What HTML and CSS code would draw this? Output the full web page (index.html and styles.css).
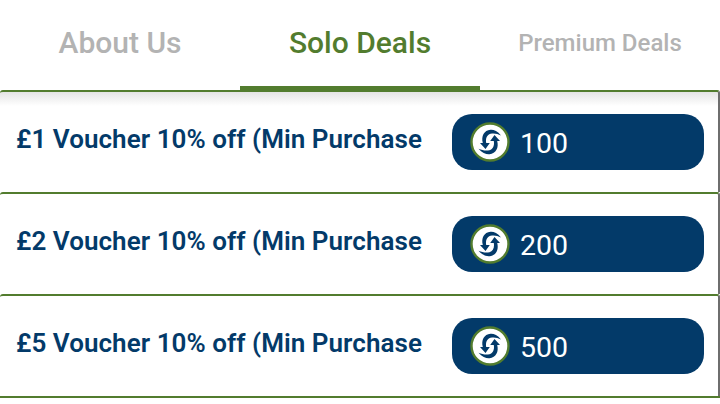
FILE: index.html
```html
<!DOCTYPE html>
<html lang="en">
<head>
<meta charset="utf-8">
<title>Deals</title>
<link rel="stylesheet" href="styles.css">
</head>
<body>
<svg class="defs" width="0" height="0" aria-hidden="true">
  <symbol id="coin" viewBox="0 0 40 40">
    <circle cx="20" cy="20" r="18.5" fill="#fff" stroke="#527c2e" stroke-width="2.4"/>
    <path d="M31 13.5 C27.5 9 23.5 7.5 20.5 7.8 C14 8.3 11 14.5 12.8 21 L10 21 L15.5 27 L19.8 21 L16.2 21 C15.4 16.5 17 12.8 20.5 11.8 C24 10.9 27.5 11.6 31 13.5 Z" fill="#033a69"/>
    <path d="M8.5 26.8 C12 31 16.5 32.5 19.5 32.2 C26 31.7 29 25.5 27.2 19 L30 19 L24.5 13 L20.2 19 L23.8 19 C24.6 23.5 23 27.2 19.5 28.2 C16 29.1 12.5 28.4 8.5 26.8 Z" fill="#033a69"/>
  </symbol>
</svg>
<nav class="tabs">
  <div class="tab tab-about">About Us</div>
  <div class="tab tab-solo">Solo Deals</div>
  <div class="tab tab-premium">Premium Deals</div>
</nav>
<main class="list">
  <article class="card">
    <div class="title">£1 Voucher 10% off (Min Purchase</div>
    <div class="price"><svg class="coin"><use href="#coin"/></svg><span class="amount">100</span></div>
  </article>
  <article class="card">
    <div class="title">£2 Voucher 10% off (Min Purchase</div>
    <div class="price"><svg class="coin"><use href="#coin"/></svg><span class="amount">200</span></div>
  </article>
  <article class="card">
    <div class="title">£5 Voucher 10% off (Min Purchase</div>
    <div class="price"><svg class="coin"><use href="#coin"/></svg><span class="amount">500</span></div>
  </article>
  <div class="end-rule"></div>
</main>
</body>
</html>
```
FILE: styles.css
```css
* { box-sizing: border-box; }
html, body { margin: 0; padding: 0; }
body {
  width: 720px;
  height: 404px;
  overflow: hidden;
  background: #fff;
  font-family: Roboto, "Liberation Sans", sans-serif;
}
.defs { display: block; height: 0; }
.tabs {
  display: flex;
  height: 90px;
}
.tab {
  flex: 1;
  display: flex;
  align-items: center;
  justify-content: center;
  padding-bottom: 6px;
  font-weight: 500;
  color: #b3b3b3;
  font-size: 30px;
}
.tab-solo {
  color: #527c2e;
  border-bottom: 4px solid #527c2e;
  padding-bottom: 2px;
}
.tab-premium { font-size: 24px; padding-bottom: 4px; }
.list { display: flex; flex-direction: column; }
.card {
  height: 102px;
  padding: 0 14px 0 16px;
  display: flex;
  align-items: center;
  justify-content: space-between;
  border-top: 2px solid #527c2e;
  border-right: 2px solid #6e6e6e;
  border-radius: 3px 3px 0 0;
  background: #fff;
}
.card:first-of-type {
  background: linear-gradient(#e4e4e4, #fff 14px);
}
.end-rule {
  height: 2px;
  background: #527c2e;
}
.title {
  font-size: 26px;
  font-weight: 600;
  letter-spacing: 0.05px;
  color: #033a69;
  white-space: nowrap;
  margin-top: -6px;
}
.price {
  width: 252px;
  height: 56px;
  padding-left: 18px;
  display: flex;
  align-items: center;
  gap: 10px;
  background: #033a69;
  border-radius: 20px;
  color: #fff;
  font-size: 28.5px;
}
.amount { padding-top: 2px; }
.coin { width: 40px; height: 40px; flex: none; }
```
